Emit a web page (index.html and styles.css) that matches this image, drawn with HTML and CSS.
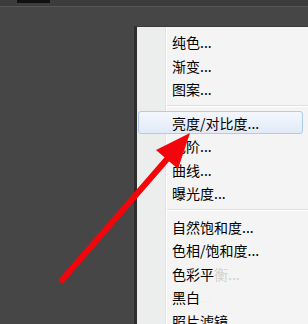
FILE: index.html
```html
<!DOCTYPE html>
<html lang="zh-CN">
<head>
    <meta charset="UTF-8">
    <meta name="viewport" content="width=device-width, initial-scale=1.0">
    <title>调整菜单</title>
    <link rel="stylesheet" href="styles.css">
</head>
<body>

    <div class="top-strip">
        <div class="tab-stub"></div>
    </div>

    <div class="menu">
        <div class="item">纯色...</div>
        <div class="item">渐变...</div>
        <div class="item">图案...</div>
        <div class="sep"></div>
        <div class="item active">亮度/对比度...</div>
        <div class="item">色阶...</div>
        <div class="item">曲线...</div>
        <div class="item">曝光度...</div>
        <div class="sep"></div>
        <div class="item">自然饱和度...</div>
        <div class="item">色相/饱和度...</div>
        <div class="item">色彩平<span class="faded">衡...</span></div>
        <div class="item">黑白<span class="gone">...</span></div>
        <div class="item">照片滤镜...</div>
    </div>

    <!-- red pointer drawn over the menu -->
    <svg class="arrow" width="308" height="324" viewBox="0 0 308 324">
        <line x1="62" y1="280" x2="168" y2="158" stroke="#f2060c" stroke-width="6" stroke-linecap="round"/>
        <polygon points="190,133 156,150 178,169" fill="#f2060c"/>
    </svg>

</body>
</html>
```

FILE: styles.css
```css
body {
    margin: 0;
    width: 308px;
    height: 324px;
    overflow: hidden;
    background-color: #464646;
    font-family: "Noto Sans CJK SC", "Noto Sans", sans-serif;
    position: relative;
}
.top-strip {
    height: 6px;
    background: #3c3c3c;
    border-bottom: 1px solid #575757;
}
.tab-stub {
    margin-left: 17px;
    width: 33px;
    height: 3px;
    background: #111;
}
.menu {
    margin: 19px 0 0 134px;
    width: 180px;
    padding-top: 3px;
    border-left: 3px solid #2e2e2e;
    border-top: 1px solid #3a3a3a;
    background: linear-gradient(to right, #eceded 0, #eceded 28px, #e0e1e1 28px, #e0e1e1 29px, #ffffff 29px, #ffffff 30px, #f4f4f4 30px);
}
.item {
    height: 23.5px;
    line-height: 22px;
    margin: 0 14px 0 1px;
    padding-left: 33px;
    border: 1px solid transparent;
    box-sizing: border-box;
    font-size: 14px;
    color: #000;
    white-space: nowrap;
}
.item.active {
    border-color: #aecbf0;
    border-radius: 3px;
    background: linear-gradient(#f3f7fd, #e2eaf8);
}
.sep {
    margin: 4px 0 4px 30px;
    border-top: 1px solid #dfdfdf;
    border-bottom: 1px solid #ffffff;
}
.faded {
    color: #d2d2d2;
}
.gone {
    color: #f0f0f0;
}
.arrow {
    position: absolute;
    left: 0;
    top: 0;
}
```
